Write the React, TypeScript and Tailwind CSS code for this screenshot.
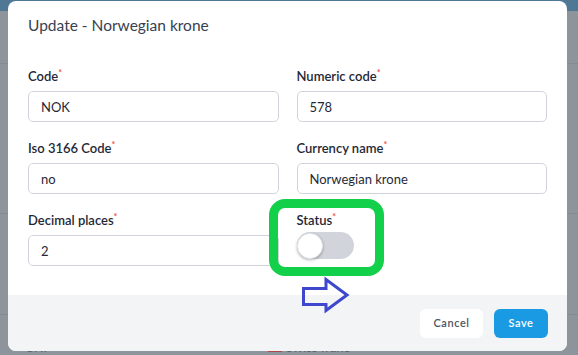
import React from "react"

type Field = {
  label: string
  value: string
}

const fields: Field[] = [
  { label: "Code", value: "NOK" },
  { label: "Numeric code", value: "578" },
  { label: "Iso 3166 Code", value: "no" },
  { label: "Currency name", value: "Norwegian krone" },
  { label: "Decimal places", value: "2" },
]

function Label({ text }: { text: string }) {
  return (
    <div className="h-5 text-[13px] leading-5 font-semibold text-[#1f2937]">
      {text}
      <span className="relative -top-[5px] text-[9px] text-[#ef4444]">*</span>
    </div>
  )
}

function TextField({ label, value }: Field) {
  return (
    <div className="flex flex-col">
      <Label text={label} />
      <input
        readOnly
        value={value}
        className="mt-[5px] h-[31px] w-full rounded-[5px] border border-[#d1d5db] bg-white px-3 text-[13px] text-[#1f2937] outline-none"
      />
    </div>
  )
}

function Background() {
  return (
    <div className="flex h-full flex-col bg-[#8e949c]">
      <div className="h-[18px] bg-[#4e7894]" />
      <div className="mt-[52px] h-px bg-[#858b93]" />
      <div className="mt-[149px] h-px bg-[#858b93]" />
      <div className="mt-[101px] h-px bg-[#858b93]" />
      <div className="mt-[24px] flex items-center text-[13px] leading-4 text-[#5a6069]">
        <span className="ml-[25px]">CHF</span>
        <span className="ml-[217px] h-[9px] w-[14px] bg-[#b04545]" />
        <span className="ml-[4px]">Swiss franc</span>
      </div>
    </div>
  )
}

export default function App() {
  return (
    <div
      className="relative h-[355px] w-[578px] overflow-hidden"
      style={{ fontFamily: "Lato, 'Noto Sans', sans-serif" }}
    >
      <Background />

      {/* modal */}
      <div className="absolute left-[8px] top-[1px] flex h-[350px] w-[559px] flex-col overflow-hidden rounded-lg bg-white">
        <div className="px-5 pt-[13px] text-[15.5px] leading-[22px] text-[#374151]">Update - Norwegian krone</div>

        <div className="grid grid-cols-2 gap-x-[18px] gap-y-[16px] px-5 pt-[30px]">
          {fields.map((f) => (
            <TextField key={f.label} label={f.label} value={f.value} />
          ))}
          <div className="flex flex-col">
            <Label text="Status" />
            <div className="mt-[2px] flex h-[27px] w-[57px] items-center rounded-full bg-[#d1d5db]">
              <div className="h-[26px] w-[26px] rounded-full border border-[#e5e7eb] bg-white shadow-[0_1px_3px_rgba(0,0,0,0.3)]" />
            </div>
          </div>
        </div>

        <div className="mt-auto flex h-[56px] items-center justify-end gap-[11px] bg-[#f3f4f6] px-[19px]">
          <button className="h-[29px] w-[63px] rounded-md bg-white text-[11px] font-semibold tracking-wider text-[#4b5563]">
            Cancel
          </button>
          <button className="h-[29px] w-[54px] rounded-md bg-[#1b9ae4] text-[11px] font-semibold tracking-wider text-white">
            Save
          </button>
        </div>
      </div>

      {/* annotation: green highlight */}
      <div className="absolute left-[269px] top-[199px] h-[77px] w-[115px] rounded-[16px] border-[9px] border-[#12d04a]" />

      {/* annotation: arrow */}
      <svg className="absolute left-[300px] top-[276px]" width="52" height="40" viewBox="0 0 52 40">
        <path
          d="M3.5 12.5 H26 V3.5 L47 19 L26 34.5 V28.5 H3.5 Z"
          fill="none"
          stroke="#3e48cc"
          strokeWidth="3"
          strokeLinejoin="miter"
        />
      </svg>
    </div>
  )
}
